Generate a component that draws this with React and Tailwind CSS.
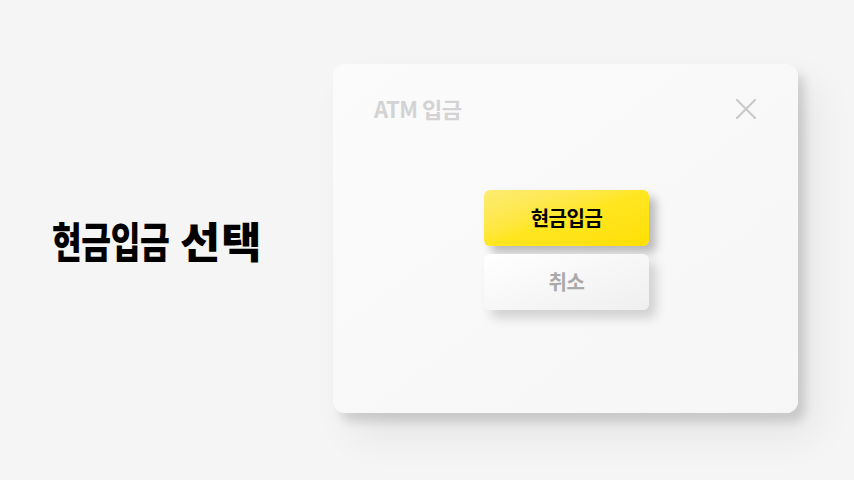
export default function App() {
  return (
    <div
      className="w-[854px] h-[480px] bg-[#f5f5f5] flex items-start overflow-hidden"
      style={{ fontFamily: '"Noto Sans CJK KR", "Noto Sans", sans-serif' }}
    >
      {/* left heading */}
      <div className="w-[333px] h-full flex items-center pl-[52px]">
        <h1 className="flex items-center text-[42px] leading-none font-black text-black whitespace-nowrap">
          <span className="w-[128px]">
            <span className="inline-block origin-left scale-x-[0.77] tracking-[-0.5px]">현금입금</span>
          </span>
          <span className="inline-block origin-left scale-x-[1.04] tracking-[1px]">선택</span>
        </h1>
      </div>

      {/* dialog card */}
      <div className="mt-[64px] w-[465px] h-[349px] rounded-[12px] bg-linear-to-br from-[#fbfbfb] to-[#f6f6f6] shadow-[7px_9px_10px_rgba(0,0,0,0.13),18px_22px_40px_rgba(0,0,0,0.07)] flex flex-col">
        <div className="flex items-center justify-between pl-[41px] pr-[42px] pt-[28px]">
          <span className="text-[22px] leading-[32px] font-bold text-[#d3d3d3] tracking-[-0.5px]">
            ATM 입금
          </span>
          <svg width="20" height="20" viewBox="0 0 20 20" className="mt-[1px]">
            <path
              d="M1 1 L19 19 M19 1 L1 19"
              stroke="#c9c9c9"
              strokeWidth="2.2"
              strokeLinecap="round"
              fill="none"
            />
          </svg>
        </div>

        <div className="flex flex-col items-center gap-[8px] mt-[66px] pl-[2px]">
          <button className="w-[165px] h-[56px] rounded-[6px] bg-linear-to-br from-[#fcec72] via-[#ffe620] to-[#ffdf00] shadow-[7px_7px_10px_rgba(0,0,0,0.25)] text-[20px] font-bold text-black tracking-[-0.5px]">
            현금입금
          </button>
          <button className="w-[165px] h-[56px] rounded-[6px] bg-linear-to-br from-white to-[#efefef] shadow-[7px_8px_12px_rgba(0,0,0,0.16)] text-[20px] font-bold text-[#a9a9a9] tracking-[-0.5px]">
            취소
          </button>
        </div>
      </div>
    </div>
  );
}
